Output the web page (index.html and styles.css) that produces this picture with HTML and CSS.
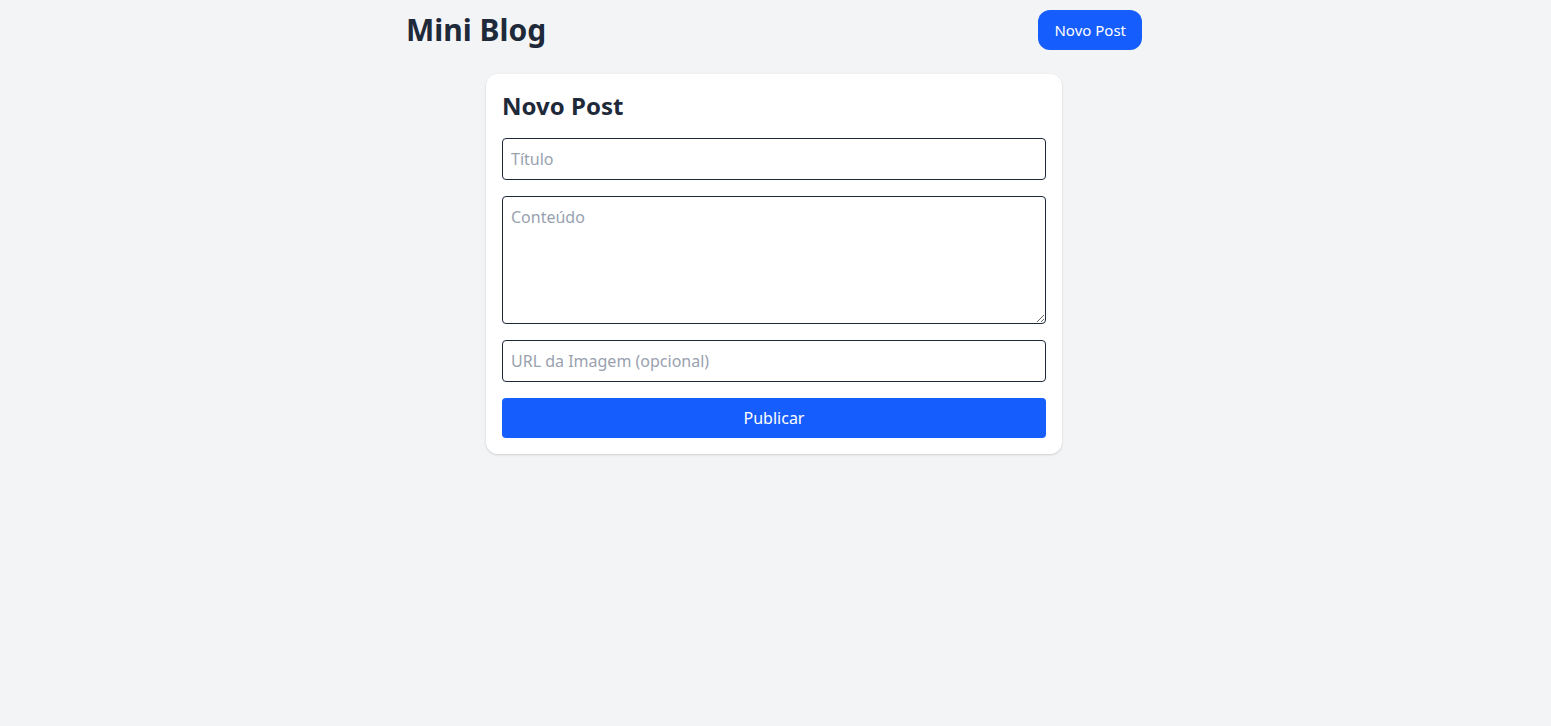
FILE: index.html
```html
<!DOCTYPE html>
<html lang="pt-BR">
<head>
<meta charset="utf-8">
<title>Mini Blog</title>
<link rel="stylesheet" href="styles.css">
</head>
<body>
<div class="container">
  <header class="header">
    <h1 class="brand">Mini Blog</h1>
    <button class="btn-new">Novo Post</button>
  </header>
  <main class="main">
    <form class="card">
      <h2 class="card-title">Novo Post</h2>
      <input class="field" type="text" placeholder="Título">
      <textarea class="field area" placeholder="Conteúdo"></textarea>
      <input class="field" type="text" placeholder="URL da Imagem (opcional)">
      <button type="button" class="btn-submit">Publicar</button>
    </form>
  </main>
</div>
</body>
</html>
```

FILE: styles.css
```css
* { box-sizing: border-box; }
html, body { margin: 0; padding: 0; }
body {
  background: #f3f4f6;
  font-family: "Noto Sans", "Open Sans", sans-serif;
  color: #1e2939;
  padding-right: 3px;
}
.container {
  max-width: 768px;
  margin: 0 auto;
  padding: 10px 16px;
}
.header {
  display: flex;
  align-items: center;
  justify-content: space-between;
}
.brand {
  margin: 0;
  font-size: 30px;
  line-height: 38px;
  font-weight: 700;
  color: #1e2939;
}
.btn-new {
  height: 40px;
  padding: 0 16px;
  border: none;
  border-radius: 12px;
  background: #155dfc;
  color: #fff;
  font-family: inherit;
  font-size: 15px;
}
.main {
  display: flex;
  justify-content: center;
  margin-top: 24px;
}
.card {
  width: 576px;
  background: #fff;
  border-radius: 12px;
  box-shadow: 0 1px 3px rgba(0,0,0,0.1), 0 1px 2px rgba(0,0,0,0.06);
  padding: 16px;
  display: flex;
  flex-direction: column;
  gap: 16px;
}
.card-title {
  margin: 0;
  font-size: 24px;
  line-height: 32px;
  font-weight: 700;
  color: #1e2939;
}
.field {
  display: block;
  width: 100%;
  height: 42px;
  padding: 8px;
  border: 1px solid #1e2939;
  border-radius: 4px;
  font-family: inherit;
  font-size: 16px;
  line-height: 24px;
  color: #1e2939;
  background: #fff;
}
.field::placeholder { color: #99a1af; }
.area {
  height: 128px;
  resize: vertical;
}
.btn-submit {
  height: 40px;
  border: none;
  border-radius: 4px;
  background: #155dfc;
  color: #fff;
  font-family: inherit;
  font-size: 16px;
}
```
